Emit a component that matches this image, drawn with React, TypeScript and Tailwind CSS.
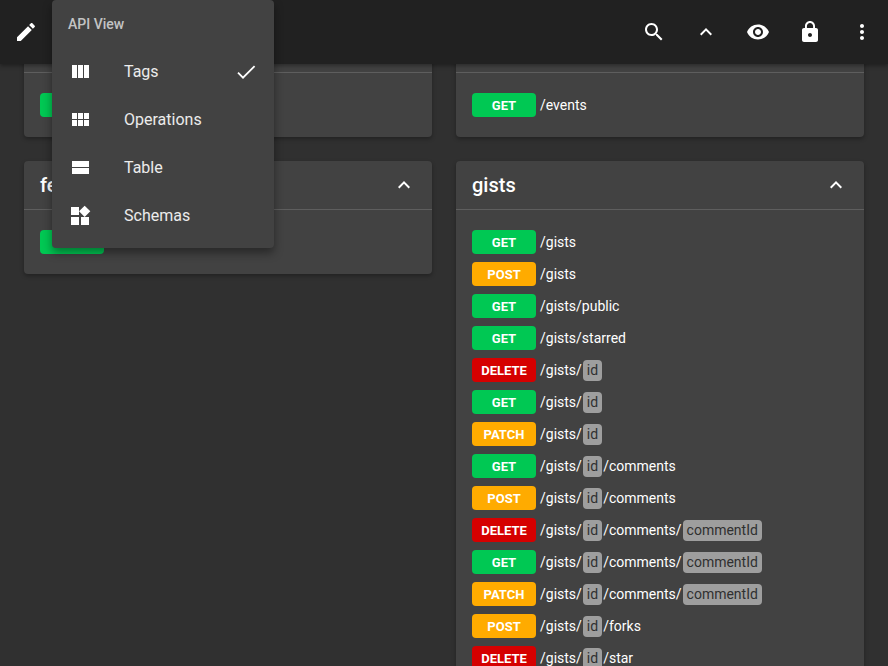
const P = {
  edit: "M3 17.25V21h3.75L17.81 9.94l-3.75-3.75L3 17.25zM20.71 7.04c.39-.39.39-1.02 0-1.41l-2.34-2.34c-.39-.39-1.02-.39-1.41 0l-1.83 1.83 3.75 3.75 1.83-1.83z",
  search: "M15.5 14h-.79l-.28-.27C15.41 12.59 16 11.11 16 9.5 16 5.91 13.09 3 9.5 3S3 5.91 3 9.5 5.91 16 9.5 16c1.61 0 3.09-.59 4.23-1.57l.27.28v.79l5 4.99L20.49 19l-4.99-5zm-6 0C7.01 14 5 11.99 5 9.5S7.01 5 9.5 5 14 7.01 14 9.5 11.99 14 9.5 14z",
  less: "M12 8l-6 6 1.41 1.41L12 10.83l4.59 4.58L18 14z",
  eye: "M12 4.5C7 4.5 2.73 7.61 1 12c1.73 4.39 6 7.5 11 7.5s9.27-3.11 11-7.5c-1.73-4.39-6-7.5-11-7.5zM12 17c-2.76 0-5-2.24-5-5s2.24-5 5-5 5 2.24 5 5-2.24 5-5 5zm0-8c-1.66 0-3 1.34-3 3s1.34 3 3 3 3-1.34 3-3-1.34-3-3-3z",
  lock: "M18 8h-1V6c0-2.76-2.24-5-5-5S7 3.24 7 6v2H6c-1.1 0-2 .9-2 2v10c0 1.1.9 2 2 2h12c1.1 0 2-.9 2-2V10c0-1.1-.9-2-2-2zm-6 9c-1.1 0-2-.9-2-2s.9-2 2-2 2 .9 2 2-.9 2-2 2zm3.1-9H8.9V6c0-1.71 1.39-3.1 3.1-3.1 1.71 0 3.1 1.39 3.1 3.1v2z",
  more: "M12 8c1.1 0 2-.9 2-2s-.9-2-2-2-2 .9-2 2 .9 2 2 2zm0 2c-1.1 0-2 .9-2 2s.9 2 2 2 2-.9 2-2-.9-2-2-2zm0 6c-1.1 0-2 .9-2 2s.9 2 2 2 2-.9 2-2-.9-2-2-2z",
  week: "M10 18h5V5h-5v13zm-6 0h5V5H4v13zM16 5v13h5V5h-5z",
  module: "M4 11h5V5H4v6zm0 7h5v-6H4v6zm6 0h5v-6h-5v6zm6 0h5v-6h-5v6zm-6-7h5V5h-5v6zm6-6v6h5V5h-5z",
  stream: "M4 18h17v-6H4v6zM4 5v6h17V5H4z",
  widgets: "M13 13v8h8v-8h-8zM3 21h8v-8H3v8zM3 3v8h8V3H3zm13.66-1.31L11 7.34 16.66 13l5.66-5.66-5.66-5.65z",
};

function Icon({ d }: { d: string }) {
  return (
    <svg viewBox="0 0 24 24" className="w-6 h-6 fill-white shrink-0">
      <path d={d} />
    </svg>
  );
}

function ThinCheck() {
  return (
    <svg viewBox="0 0 24 24" className="w-6 h-6 shrink-0 fill-none stroke-white stroke-[1.8]">
      <path d="M4 12.7l5 5L20.6 6.1" />
    </svg>
  );
}

const colors: Record<string, string> = {
  GET: "bg-[#00c853]",
  POST: "bg-[#ffab00]",
  PATCH: "bg-[#ffab00]",
  DELETE: "bg-[#d50000]",
};

function Row({ method, path }: { method: string; path: string }) {
  const parts = path.split(/(\{[^}]+\})/).filter(Boolean);
  return (
    <div className="flex items-center h-6 mb-2">
      <span className={`w-16 h-6 pt-px rounded flex items-center justify-center text-[13px] font-bold text-white shrink-0 ${colors[method]}`}>
        {method}
      </span>
      <span className="ml-1 flex items-center text-sm text-white">
        {parts.map((p, i) =>
          p.startsWith("{") ? (
            <span key={i} className="mx-px px-[4px] h-[21px] leading-[21px] rounded bg-[#9e9e9e] text-[#303030]">
              {p.slice(1, -1)}
            </span>
          ) : (
            <span key={i}>{p}</span>
          )
        )}
      </span>
    </div>
  );
}

function Card({ title, rows }: { title: string; rows: [string, string][] }) {
  return (
    <div className="bg-[#424242] rounded-[4px] shadow-[0_2px_4px_rgba(0,0,0,0.3)]">
      <div className="h-12 flex items-center justify-between pl-4 pr-[16px] border-b border-white/15 box-content">
        <span className="text-xl font-medium text-white">{title}</span>
        <Icon d={P.less} />
      </div>
      <div className="pt-5 pb-3 px-4">
        {rows.map(([m, p], i) => (
          <Row key={i} method={m} path={p} />
        ))}
      </div>
    </div>
  );
}

const gists: [string, string][] = [
  ["GET", "/gists"],
  ["POST", "/gists"],
  ["GET", "/gists/public"],
  ["GET", "/gists/starred"],
  ["DELETE", "/gists/{id}"],
  ["GET", "/gists/{id}"],
  ["PATCH", "/gists/{id}"],
  ["GET", "/gists/{id}/comments"],
  ["POST", "/gists/{id}/comments"],
  ["DELETE", "/gists/{id}/comments/{commentId}"],
  ["GET", "/gists/{id}/comments/{commentId}"],
  ["PATCH", "/gists/{id}/comments/{commentId}"],
  ["POST", "/gists/{id}/forks"],
  ["DELETE", "/gists/{id}/star"],
  ["GET", "/gists/{id}/star"],
];

const menu = [
  { d: P.week, label: "Tags", checked: true },
  { d: P.module, label: "Operations" },
  { d: P.stream, label: "Table" },
  { d: P.widgets, label: "Schemas" },
];

export default function App() {
  return (
    <div className="relative h-[666px] overflow-hidden bg-[#303030] font-['Roboto',sans-serif]">
      <header className="absolute inset-x-0 top-0 h-16 z-10 bg-[#212121] flex items-center justify-between shadow-[0_2px_4px_rgba(0,0,0,0.35)]">
        <div className="w-[52px] flex justify-center">
          <Icon d={P.edit} />
        </div>
        <div className="flex">
          {[P.search, P.less, P.eye, P.lock, P.more].map((d, i) => (
            <div key={i} className="w-[52px] flex justify-center">
              <Icon d={d} />
            </div>
          ))}
        </div>
      </header>

      <div className="absolute z-20 left-[52px] top-0 w-[222px] h-[248px] bg-[#424242] rounded-[4px] shadow-[0_5px_10px_rgba(0,0,0,0.4)] flex flex-col">
        <div className="h-12 px-4 flex items-center text-sm font-medium text-white/70">API View</div>
        {menu.map((m) => (
          <div key={m.label} className="h-12 pl-4 pr-4 flex items-center">
            <Icon d={m.d} />
            <span className="ml-8 flex-1 text-base text-white/90">{m.label}</span>
            {m.checked && <ThinCheck />}
          </div>
        ))}
      </div>

      <main className="grid grid-cols-2 gap-6 p-6 items-start">
        <div className="flex flex-col gap-6">
          <Card title="emojis" rows={[["GET", "/emojis"]]} />
          <Card title="feeds" rows={[["GET", "/feeds"]]} />
        </div>
        <div className="flex flex-col gap-6">
          <Card title="events" rows={[["GET", "/events"]]} />
          <Card title="gists" rows={gists} />
        </div>
      </main>
    </div>
  );
}
